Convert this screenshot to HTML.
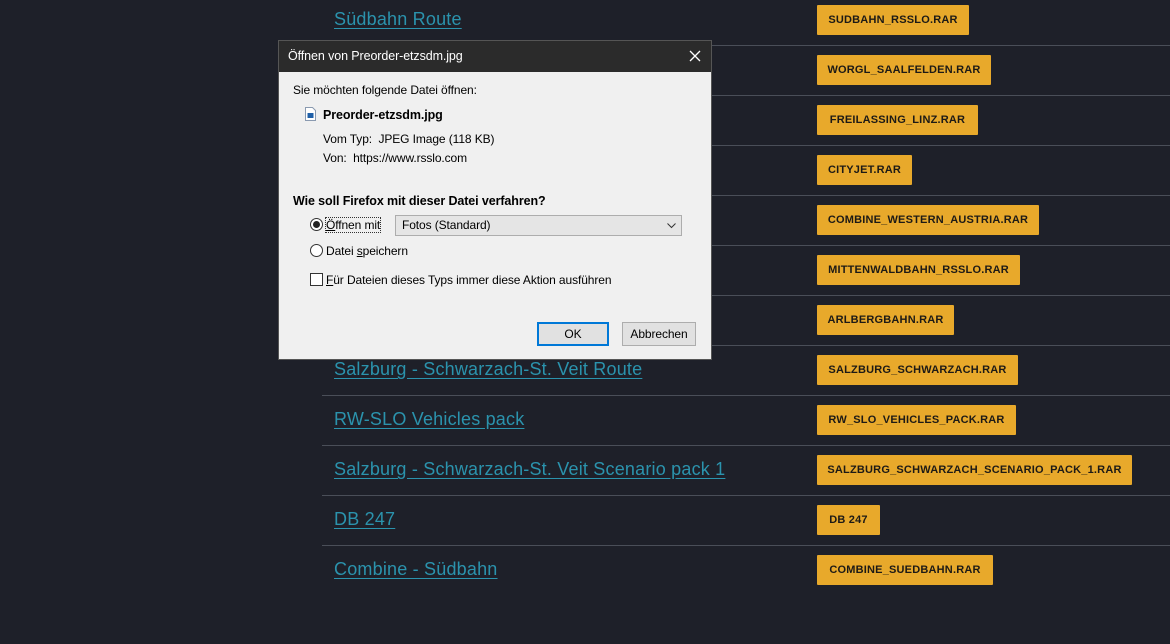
<!DOCTYPE html>
<html><head><meta charset="utf-8"><style>
*{margin:0;padding:0;box-sizing:border-box}
body{width:1170px;height:644px;background:#1e2029;position:relative;overflow:hidden;font-family:"Liberation Sans",sans-serif}
.sep{position:absolute;left:322px;right:0;height:1px;background:#4a4e58}
.lnk{position:absolute;left:334px;color:#2b93ad;font-size:18px;text-decoration:underline;text-underline-offset:3px;white-space:nowrap;letter-spacing:0.2px}
.btn{position:absolute;left:817px;height:30px;background:#e8a92b;color:#1d1a16;font-weight:bold;font-size:11px;line-height:30px;text-align:center;white-space:nowrap;letter-spacing:0.2px;border-radius:1px}
.dlg{position:absolute;left:278px;top:40px;width:434px;height:320px;background:#f0f0f0;border:1px solid #555;font-size:12px;color:#000;letter-spacing:-0.1px}
.tb{height:31px;background:#2b2b2b;color:#fff;font-size:12.5px;line-height:31px;padding-left:9px;position:relative}
.d{position:absolute;white-space:nowrap}
</style></head><body>
<div class="sep" style="top:45px"></div><div class="sep" style="top:95px"></div><div class="sep" style="top:145px"></div><div class="sep" style="top:195px"></div><div class="sep" style="top:245px"></div><div class="sep" style="top:295px"></div><div class="sep" style="top:345px"></div><div class="sep" style="top:395px"></div><div class="sep" style="top:445px"></div><div class="sep" style="top:495px"></div><div class="sep" style="top:545px"></div>

<div class="lnk" style="top:9px">Südbahn Route</div>
<div class="lnk" style="top:359px">Salzburg - Schwarzach-St. Veit Route</div>
<div class="lnk" style="top:409px">RW-SLO Vehicles pack</div>
<div class="lnk" style="top:459px">Salzburg - Schwarzach-St. Veit Scenario pack 1</div>
<div class="lnk" style="top:509px">DB 247</div>
<div class="lnk" style="top:559px">Combine - Südbahn</div>

<div class="btn" style="top:5px;width:152px">SUDBAHN_RSSLO.RAR</div>
<div class="btn" style="top:55px;width:174px">WORGL_SAALFELDEN.RAR</div>
<div class="btn" style="top:105px;width:161px">FREILASSING_LINZ.RAR</div>
<div class="btn" style="top:155px;width:95px">CITYJET.RAR</div>
<div class="btn" style="top:205px;width:222px">COMBINE_WESTERN_AUSTRIA.RAR</div>
<div class="btn" style="top:255px;width:203px">MITTENWALDBAHN_RSSLO.RAR</div>
<div class="btn" style="top:305px;width:137px">ARLBERGBAHN.RAR</div>
<div class="btn" style="top:355px;width:201px">SALZBURG_SCHWARZACH.RAR</div>
<div class="btn" style="top:405px;width:199px">RW_SLO_VEHICLES_PACK.RAR</div>
<div class="btn" style="top:455px;width:315px">SALZBURG_SCHWARZACH_SCENARIO_PACK_1.RAR</div>
<div class="btn" style="top:505px;width:63px">DB 247</div>
<div class="btn" style="top:555px;width:176px">COMBINE_SUEDBAHN.RAR</div>

<div class="dlg">
 <div class="tb">Öffnen von Preorder-etzsdm.jpg
  <svg style="position:absolute;right:10px;top:9px" width="12" height="12"><path d="M1 1L11 11M11 1L1 11" stroke="#fff" stroke-width="1.3"/></svg></div>
 <div class="d" style="left:14px;top:42px">Sie möchten folgende Datei öffnen:</div>
 <svg class="d" style="left:26px;top:66px" width="11" height="14"><path d="M0.5 0.5H7.5L10.5 3.5V13.5H0.5Z" fill="#fff" stroke="#8a9ab0"/><rect x="2.5" y="6" width="6" height="5" fill="#2060a8"/></svg>
 <div class="d" style="left:44px;top:67px;font-weight:bold;font-size:12.5px">Preorder-etzsdm.jpg</div>
 <div class="d" style="left:44px;top:91px">Vom Typ:&nbsp; JPEG Image (118 KB)</div>
 <div class="d" style="left:44px;top:110px">Von:&nbsp; https://www.rsslo.com</div>
 <div class="d" style="left:14px;top:153px;font-weight:bold;font-size:12.5px">Wie soll Firefox mit dieser Datei verfahren?</div>
 <div class="d" style="left:31px;top:177px;width:13px;height:13px;border:1px solid #333;border-radius:50%;background:#fff"><div style="position:absolute;left:2px;top:2px;width:7px;height:7px;border-radius:50%;background:#222"></div></div>
 <div class="d" style="left:47px;top:177px;outline:1px dotted #333"><u>Ö</u>ffnen mit</div>
 <div class="d" style="left:116px;top:174px;width:287px;height:21px;border:1px solid #adadad;background:#e5e5e5;line-height:19px;padding-left:6px">Fotos (Standard)
  <svg style="position:absolute;right:5px;top:7px" width="9" height="6"><path d="M0.5 0.5L4.5 4.5L8.5 0.5" stroke="#333" fill="none"/></svg></div>
 <div class="d" style="left:31px;top:203px;width:13px;height:13px;border:1px solid #333;border-radius:50%;background:#fff"></div>
 <div class="d" style="left:47px;top:203px">Datei <u>s</u>peichern</div>
 <div class="d" style="left:31px;top:232px;width:13px;height:13px;border:1px solid #333;background:#fff"></div>
 <div class="d" style="left:47px;top:232px"><u>F</u>ür Dateien dieses Typs immer diese Aktion ausführen</div>
 <div class="d" style="left:258px;top:281px;width:72px;height:24px;border:2px solid #0078d7;background:#e1e1e1;text-align:center;line-height:20px">OK</div>
 <div class="d" style="left:343px;top:281px;width:74px;height:24px;border:1px solid #adadad;background:#e1e1e1;text-align:center;line-height:22px">Abbrechen</div>
</div>
</body></html>
